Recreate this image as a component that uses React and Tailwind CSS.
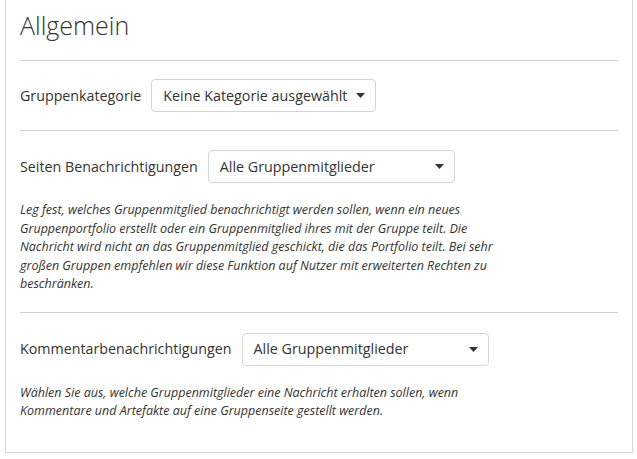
import React from "react";

function Caret() {
  return (
    <svg width="9" height="5" viewBox="0 0 9 5" className="shrink-0">
      <path d="M0 0 L9 0 L4.5 5 Z" fill="#333" />
    </svg>
  );
}

function Select({ children, fixed }) {
  return (
    <div
      className={
        "flex h-[33px] items-center justify-between rounded-[4px] border border-[#d4d4d4] bg-white pl-[11px] pr-[10px] text-[14.3px] text-[#333] " +
        (fixed ? "w-[247px]" : "gap-[9px]")
      }
    >
      <span className="whitespace-nowrap">{children}</span>
      <Caret />
    </div>
  );
}

export default function App() {
  return (
    <div
      className="h-[459px] w-[637px] bg-white"
      style={{ fontFamily: '"Open Sans", sans-serif' }}
    >
      <div className="ml-[5px] h-[453px] w-[628px] border-x border-b border-[#d6d6d6] px-[14px] text-[#333]">
        <h1 className="pt-[10px] text-[25px] font-light leading-[30px] text-[#333]">
          Allgemein
        </h1>
        <div className="mt-[20px] border-t border-[#d0d0d0]" />
        <div className="flex items-center gap-[10px] py-[18px]">
          <span className="text-[14.25px]">Gruppenkategorie</span>
          <Select>Keine Kategorie ausgewählt</Select>
        </div>
        <div className="border-t border-[#d0d0d0]" />
        <div className="pt-[19px] pb-[18px]">
          <div className="flex items-center gap-[10px]">
            <span className="text-[14.25px]">Seiten Benachrichtigungen</span>
            <Select fixed>Alle Gruppenmitglieder</Select>
          </div>
          <p className="mt-[18px] whitespace-nowrap text-[12.5px] italic leading-[18.5px] text-[#333]">
            Leg fest, welches Gruppenmitglied benachrichtigt werden sollen, wenn ein neues
            <br />
            Gruppenportfolio erstellt oder ein Gruppenmitglied ihres mit der Gruppe teilt. Die
            <br />
            Nachricht wird nicht an das Gruppenmitglied geschickt, die das Portfolio teilt. Bei sehr
            <br />
            großen Gruppen empfehlen wir diese Funktion auf Nutzer mit erweiterten Rechten zu
            <br />
            beschränken.
          </p>
        </div>
        <div className="border-t border-[#d0d0d0]" />
        <div className="pt-[20px]">
          <div className="flex items-center gap-[10px]">
            <span className="text-[14.25px]">Kommentarbenachrichtigungen</span>
            <Select fixed>Alle Gruppenmitglieder</Select>
          </div>
          <p className="mt-[18px] whitespace-nowrap text-[12.5px] italic leading-[18.5px] text-[#333]">
            Wählen Sie aus, welche Gruppenmitglieder eine Nachricht erhalten sollen, wenn
            <br />
            Kommentare und Artefakte auf eine Gruppenseite gestellt werden.
          </p>
        </div>
      </div>
    </div>
  );
}
